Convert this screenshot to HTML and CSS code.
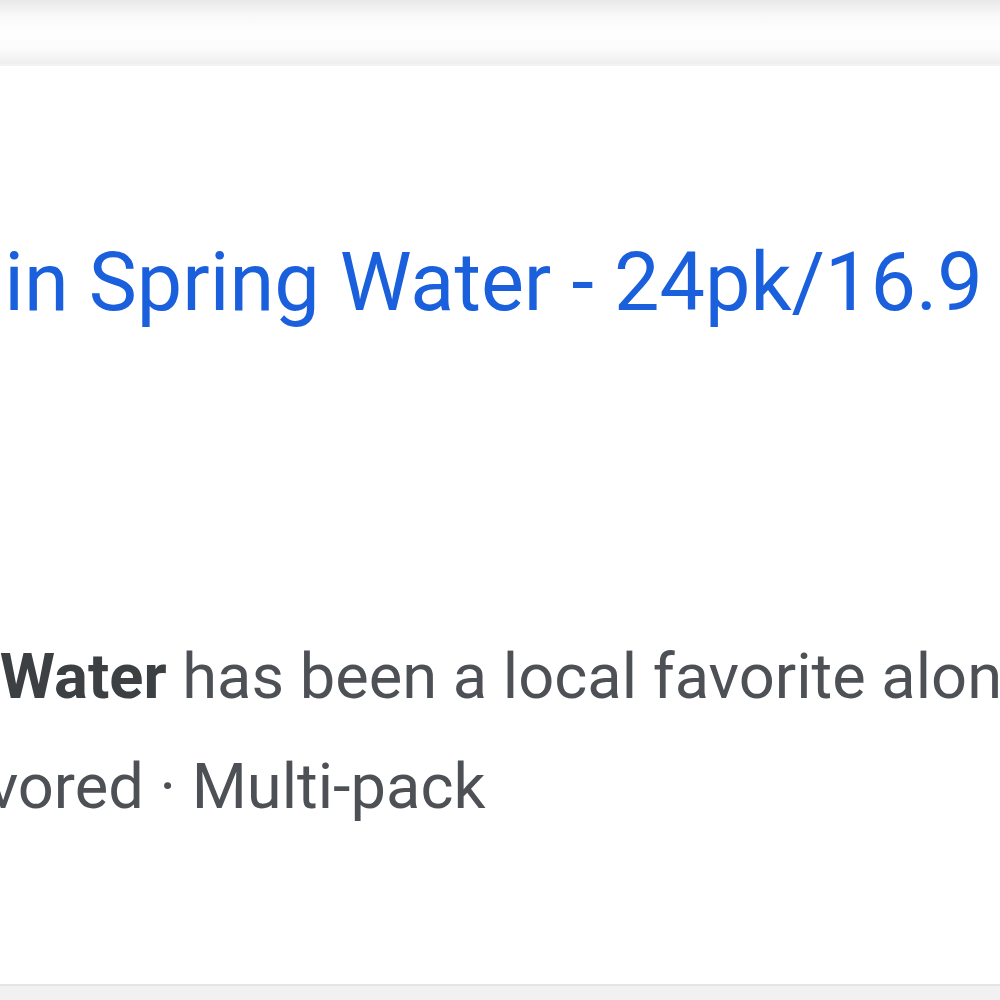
FILE: index.html
```html
<!DOCTYPE html>
<html lang="en">
<head>
  <meta charset="UTF-8">
  <title>Arrowhead Mountain Spring Water</title>
  <link rel="stylesheet" href="styles.css">
</head>
<body>
  <div class="top-shadow"></div>
  <div class="result">
    <a class="title" href="#">Arrowhead 100% Mountain Spring Water - 24pk/16.9 fl oz Bottles</a>
    <div class="snippet">
      <div class="line first"><b>Arrowhead Mountain Spring Water</b> has been a local favorite along the West Coast</div>
      <div class="line second">Unflavored · Multi-pack</div>
    </div>
  </div>
  <div class="bottom-bar"></div>
</body>
</html>
```

FILE: styles.css
```css
html, body {
  margin: 0;
  height: 100%;
  overflow: hidden;
  background: #fff;
  font-family: Roboto, Arial, sans-serif;
}

.top-shadow {
  height: 64px;
  background: linear-gradient(#e9e9e9, #f9f9f9 25%, #fefefe 50%, #fcfcfc 75%, #eeeeee);
  border-bottom: 2px solid #f3f3f3;
}

.result {
  height: 918px;
  background: #fff;
  overflow: hidden;
}

.title {
  display: block;
  white-space: nowrap;
  margin: 0 0 0 -900px;
  padding-top: 167px;
  font-size: 81px;
  line-height: 100px;
  color: #1a5fdc;
  text-decoration: none;
}

.snippet {
  padding-top: 288px;
  color: #4d5156;
  font-size: 63.2px;
  line-height: 110px;
}

.line {
  white-space: nowrap;
}

.first {
  margin-left: -811px;
}

.first b {
  color: #3c4043;
}

.second {
  margin-left: -158px;
}

.bottom-bar {
  height: 16px;
  background: #f1f1f1;
  border-top: 2px solid #e4e4e4;
}
```
